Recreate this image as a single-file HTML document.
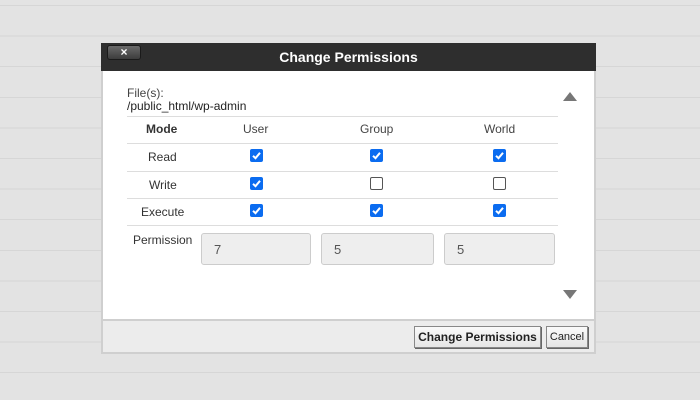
<!DOCTYPE html>
<html><head><style>
*{box-sizing:border-box;margin:0;padding:0}
body{width:700px;height:400px;overflow:hidden;position:relative;font-family:"Liberation Sans",Arial,sans-serif;
background:#e3e3e3 repeating-linear-gradient(to bottom,transparent 0,transparent 5px,#d6d6d6 5px,#d6d6d6 6px,transparent 6px,transparent 30.6px);}
.a{position:absolute}
.dlg{left:101px;top:43px;width:495px;height:311px;background:#fff;border:2px solid #cfcfcf;border-top:none}
.title{left:101px;top:43px;width:495px;height:28px;background:#2e2e2e;color:#fff;font-weight:bold;font-size:14px;text-align:center;line-height:29px;padding-left:0}
.close{left:107px;top:45px;width:34px;height:15px;border-radius:3px;background:linear-gradient(#6a6a6a,#3c3c3c);border:1px solid #1a1a1a;color:#fff;font-size:12px;font-weight:bold;text-align:center;line-height:12px}
.footer{left:103px;top:319px;width:491px;height:33px;background:#ececec;border-top:2px solid #cfcfcf}
.t{font-size:12px;color:#333}
.hl{left:127px;width:431px;height:1px;background:#ddd}
.cb{width:13px;height:13px;border-radius:2px;background:#0b6cf0}
.cb svg{display:block}
.ucb{width:13px;height:13px;border-radius:2px;border:1px solid #555;background:#fff}
.in{height:32px;top:233px;background:#eee;border:1px solid #ccc;border-radius:3px;font-size:13px;color:#555;padding:8px 0 0 12px}
.btn{top:326px;height:22px;border:1px solid #888;background:linear-gradient(#fafafa,#e6e6e6);font-size:12px;color:#222;text-align:center;line-height:20px;box-shadow:1px 1px 0 #666}
.tri{width:0;height:0;border-left:7px solid transparent;border-right:7px solid transparent}
</style></head><body>
<div class="a dlg"></div>
<div class="a title">Change Permissions</div>
<div class="a close">×</div>
<div class="a footer"></div>
<div class="a t" style="left:127px;top:86px;color:#444">File(s):</div>
<div class="a t" style="left:127px;top:99px;color:#222">/public_html/wp-admin</div>
<div class="a hl" style="top:116px"></div>
<div class="a hl" style="top:143px"></div>
<div class="a hl" style="top:171px"></div>
<div class="a hl" style="top:198px"></div>
<div class="a hl" style="top:225px"></div>
<div class="a t" style="left:146px;top:122px;font-weight:bold">Mode</div>
<div class="a t" style="left:243px;top:122px;color:#444">User</div>
<div class="a t" style="left:360px;top:122px;color:#444">Group</div>
<div class="a t" style="left:484px;top:122px;color:#444">World</div>
<div class="a t" style="left:148px;top:150px">Read</div>
<div class="a t" style="left:149px;top:178px">Write</div>
<div class="a t" style="left:141px;top:205px">Execute</div>
<div class="a t" style="left:133px;top:233px">Permission</div>

<div class="a cb" style="left:250px;top:149px"><svg width="13" height="13"><path d="M3 6.8L5.5 9.2L10 3.8" stroke="#fff" stroke-width="2" fill="none"/></svg></div>
<div class="a cb" style="left:370px;top:149px"><svg width="13" height="13"><path d="M3 6.8L5.5 9.2L10 3.8" stroke="#fff" stroke-width="2" fill="none"/></svg></div>
<div class="a cb" style="left:493px;top:149px"><svg width="13" height="13"><path d="M3 6.8L5.5 9.2L10 3.8" stroke="#fff" stroke-width="2" fill="none"/></svg></div>
<div class="a cb" style="left:250px;top:177px"><svg width="13" height="13"><path d="M3 6.8L5.5 9.2L10 3.8" stroke="#fff" stroke-width="2" fill="none"/></svg></div>
<div class="a ucb" style="left:370px;top:177px"></div>
<div class="a ucb" style="left:493px;top:177px"></div>
<div class="a cb" style="left:250px;top:204px"><svg width="13" height="13"><path d="M3 6.8L5.5 9.2L10 3.8" stroke="#fff" stroke-width="2" fill="none"/></svg></div>
<div class="a cb" style="left:370px;top:204px"><svg width="13" height="13"><path d="M3 6.8L5.5 9.2L10 3.8" stroke="#fff" stroke-width="2" fill="none"/></svg></div>
<div class="a cb" style="left:493px;top:204px"><svg width="13" height="13"><path d="M3 6.8L5.5 9.2L10 3.8" stroke="#fff" stroke-width="2" fill="none"/></svg></div>

<div class="a in" style="left:201px;width:110px">7</div>
<div class="a in" style="left:321px;width:113px">5</div>
<div class="a in" style="left:444px;width:111px">5</div>

<div class="a tri" style="left:563px;top:92px;border-bottom:9px solid #777"></div>
<div class="a tri" style="left:563px;top:290px;border-top:9px solid #777"></div>

<div class="a btn" style="left:414px;width:127px;font-weight:bold">Change Permissions</div>
<div class="a btn" style="left:546px;width:42px;font-size:11px">Cancel</div>
</body></html>
